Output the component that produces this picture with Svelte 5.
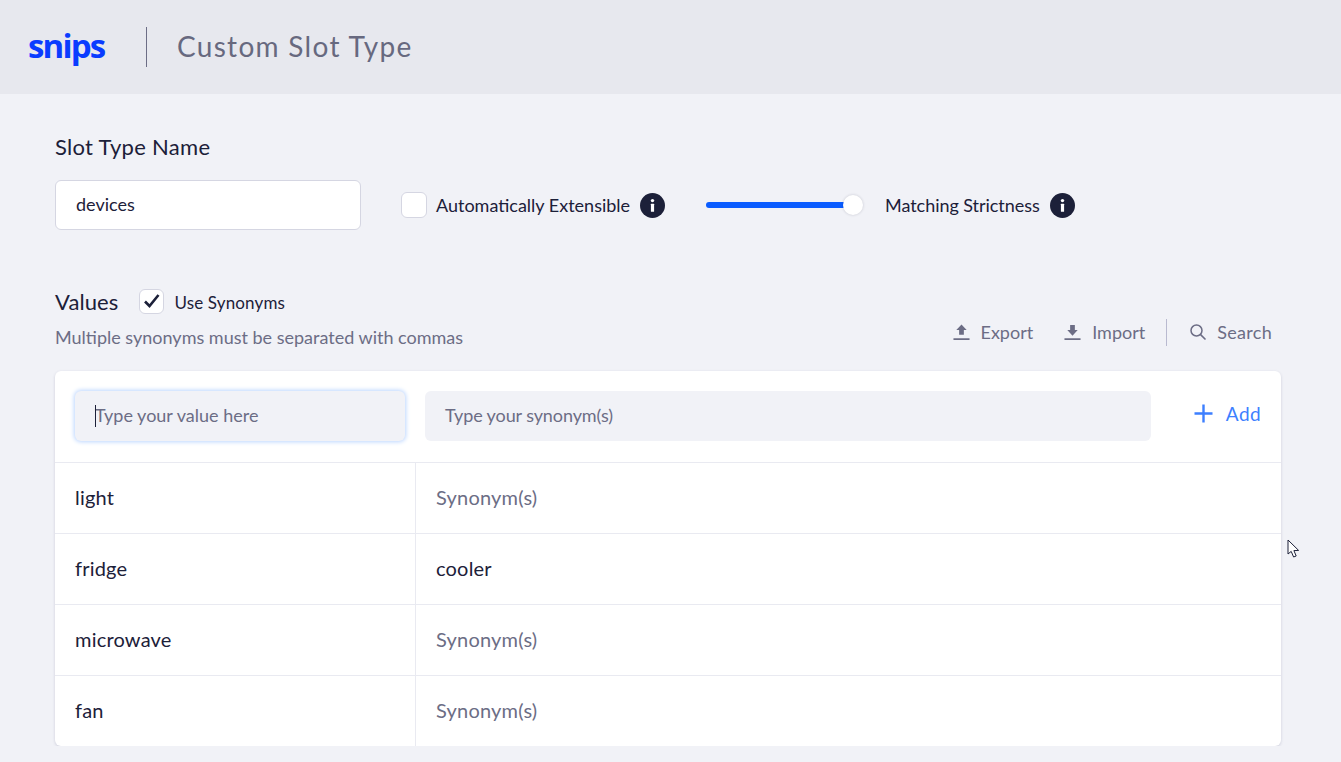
<script>
  const rows = [
    { value: "light", synonyms: "" },
    { value: "fridge", synonyms: "cooler" },
    { value: "microwave", synonyms: "" },
    { value: "fan", synonyms: "" },
  ];
</script>

{#snippet info()}
  <span class="info" aria-hidden="true">
    <svg width="25" height="25" viewBox="0 0 25 25">
      <circle cx="12.5" cy="12.5" r="12.5" fill="#1c2039" />
      <circle cx="12.5" cy="7.6" r="1.7" fill="#fff" />
      <rect x="10.9" y="10.8" width="3.2" height="8" rx="0.5" fill="#fff" />
    </svg>
  </span>
{/snippet}

<header class="topbar">
  <span class="logo">snips</span>
  <span class="topbar-sep"></span>
  <h1>Custom Slot Type</h1>
</header>

<main class="page">
  <h2 class="name-label">Slot Type Name</h2>
  <div class="settings">
    <div class="name-input">devices</div>
    <span class="box"></span>
    <span class="setting-text">Automatically Extensible</span>
    {@render info()}
    <div class="slider">
      <span class="track"></span>
      <span class="thumb"></span>
    </div>
    <span class="setting-text strict">Matching Strictness</span>
    {@render info()}
  </div>

  <div class="values-head">
    <div>
      <div class="values-title">
        <h2>Values</h2>
        <span class="box checked">
          <svg width="18" height="16" viewBox="0 0 18 16">
            <path d="M2 8.5 L6.5 13 L15.5 2" fill="none" stroke="#1c2039" stroke-width="2.6" />
          </svg>
        </span>
        <span class="synonyms-label">Use Synonyms</span>
      </div>
      <p class="hint">Multiple synonyms must be separated with commas</p>
    </div>
    <div class="tools">
      <span class="tool">
        <svg width="17" height="18" viewBox="0 0 18 18">
          <path d="M9 1 L14.5 7 H11.5 V12 H6.5 V7 H3.5 Z M0.5 15.5 H17.5 V17.5 H0.5 Z" fill="#6c6d85" />
        </svg>
        Export
      </span>
      <span class="tool">
        <svg width="17" height="18" viewBox="0 0 18 18">
          <path d="M9 13 L14.5 7 H11.5 V1.5 H6.5 V7 H3.5 Z M0.5 15.5 H17.5 V17.5 H0.5 Z" fill="#6c6d85" />
        </svg>
        Import
      </span>
      <span class="tools-sep"></span>
      <span class="tool search">
        <svg width="18" height="18" viewBox="0 0 18 18">
          <circle cx="7.5" cy="7.5" r="5.5" fill="none" stroke="#6c6d85" stroke-width="1.5" />
          <path d="M11.6 11.6 L16.5 16.5" stroke="#6c6d85" stroke-width="1.6" />
        </svg>
        Search
      </span>
    </div>
  </div>

  <section class="card">
    <div class="add-row">
      <div class="field focused"><span class="caret"></span>Type your value here</div>
      <div class="field wide">Type your synonym(s)</div>
      <span class="add">
        <svg width="19" height="19" viewBox="0 0 19 19">
          <path d="M9.5 0.5 V18.5 M0.5 9.5 H18.5" stroke="#3d7fff" stroke-width="2.4" />
        </svg>
        Add
      </span>
    </div>
    {#each rows as row}
      <div class="row">
        <div class="cell value">{row.value}</div>
        <div class="cell" class:muted={!row.synonyms}>{row.synonyms || "Synonym(s)"}</div>
      </div>
    {/each}
  </section>

  <svg class="cursor" width="13" height="20" viewBox="0 0 13 20">
    <path d="M1 1 V15 L4.2 12.4 L6.6 18 L9.2 17 L6.9 11.6 L11.6 11.4 Z" fill="#fff" stroke="#1c2039" stroke-width="1" />
  </svg>
</main>

<style>
  :global(body) {
    background: #f1f2f7;
    color: #1c2039;
    font-family: Lato, "Open Sans", sans-serif;
    overflow: hidden;
  }

  h1,
  h2,
  p {
    margin: 0;
    font-weight: 400;
  }

  .topbar {
    height: 94px;
    background: #e7e8ee;
    display: flex;
    align-items: center;
    padding-left: 28px;
  }

  .logo {
    width: 78px;
    margin-top: -3px;
    color: #0a3cff;
    font-family: "Open Sans", sans-serif;
    font-size: 33px;
    font-weight: 700;
    letter-spacing: -1.8px;
    line-height: 40px;
  }

  .topbar-sep {
    width: 1px;
    height: 40px;
    margin: 0 30px 0 40px;
    background: #6c6d85;
  }

  h1 {
    margin-top: -2px;
    color: #67697f;
    font-size: 28px;
    letter-spacing: 1.3px;
  }

  .page {
    position: relative;
    padding: 40px 60px 0 55px;
  }

  .name-label {
    font-size: 22px;
    line-height: 26px;
    letter-spacing: 0.3px;
  }

  .settings {
    display: flex;
    align-items: center;
    margin-top: 20px;
    font-size: 18px;
  }

  .name-input {
    width: 306px;
    height: 50px;
    box-sizing: border-box;
    margin-right: 40px;
    padding-left: 20px;
    border: 1px solid #d5d6e2;
    border-radius: 6px;
    background: #fff;
    line-height: 47px;
  }

  .box {
    width: 26px;
    height: 26px;
    box-sizing: border-box;
    border: 1px solid #d5d6e2;
    border-radius: 6px;
    background: #fff;
    display: flex;
    align-items: center;
    justify-content: center;
    flex: none;
  }

  .box.checked {
    width: 25px;
    height: 25px;
  }

  .setting-text {
    margin-left: 9px;
    margin-right: 10px;
  }

  .setting-text.strict {
    letter-spacing: -0.05px;
  }

  .info {
    display: flex;
  }

  .slider {
    position: relative;
    width: 157px;
    height: 22px;
    margin: 0 13px 0 41px;
  }

  .track {
    position: absolute;
    left: 0;
    top: 8px;
    width: 140px;
    height: 6px;
    border-radius: 3px;
    background: #0a5cff;
  }

  .thumb {
    position: absolute;
    right: 0;
    top: 1px;
    width: 20px;
    height: 20px;
    border-radius: 50%;
    background: #fff;
    box-shadow: 0 0 3px rgba(28, 32, 57, 0.2);
  }

  .values-head {
    display: flex;
    justify-content: space-between;
    align-items: flex-end;
    margin-top: 58px;
  }

  .values-title {
    display: flex;
    align-items: center;
    height: 26px;
  }

  .values-title h2 {
    font-size: 22px;
    letter-spacing: 0.1px;
    margin-right: 21px;
  }

  .synonyms-label {
    margin-left: 10px;
    padding-top: 2px;
    font-size: 17px;
    letter-spacing: 0.15px;
  }

  .hint {
    margin-top: 11px;
    color: #6c6d85;
    font-size: 18px;
    line-height: 24px;
  }

  .tools {
    display: flex;
    align-items: center;
    height: 28px;
    margin-bottom: 3px;
    padding-right: 9px;
    color: #6c6d85;
    font-size: 18px;
  }

  .tool {
    display: flex;
    align-items: center;
    gap: 11px;
    margin-right: 31px;
  }

  .tools-sep {
    width: 1px;
    height: 27px;
    margin-right: 22px;
    margin-left: -10px;
    background: #b9bad0;
  }

  .tool.search {
    margin-right: 0;
    gap: 10px;
    letter-spacing: 0.3px;
  }

  .card {
    margin-top: 22px;
    border-radius: 6px;
    background: #fff;
    box-shadow: 0 1px 3px rgba(60, 65, 110, 0.2);
  }

  .add-row {
    display: flex;
    align-items: center;
    height: 91px;
    box-sizing: border-box;
    padding: 0 20px 1px;
    gap: 20px;
  }

  .field {
    position: relative;
    width: 330px;
    height: 50px;
    box-sizing: border-box;
    padding-left: 20px;
    border-radius: 6px;
    background: #f1f2f7;
    color: #6c6d85;
    font-size: 18px;
    line-height: 49px;
  }

  .field.focused {
    box-shadow: 0 0 4px 1px #bcd6ff;
  }

  .field.wide {
    flex: 1;
    letter-spacing: -0.1px;
  }

  .caret {
    position: absolute;
    left: 20px;
    top: 14px;
    width: 1px;
    height: 22px;
    background: #1c2039;
  }

  .add {
    display: flex;
    align-items: center;
    gap: 13px;
    margin-left: 23px;
    padding-bottom: 6px;
    color: #3d7fff;
    font-size: 19px;
    letter-spacing: 0.4px;
  }

  .row {
    display: grid;
    grid-template-columns: 361px 1fr;
    height: 71px;
    border-top: 1px solid #e9eaf1;
    box-sizing: border-box;
    font-size: 20px;
    letter-spacing: 0.2px;
  }

  .cell {
    padding-left: 20px;
    line-height: 69px;
  }

  .cell.value {
    border-right: 1px solid #e9eaf1;
  }

  .muted {
    color: #6c6d85;
  }

  .cursor {
    position: absolute;
    left: 1287px;
    top: 445px;
  }
</style>
